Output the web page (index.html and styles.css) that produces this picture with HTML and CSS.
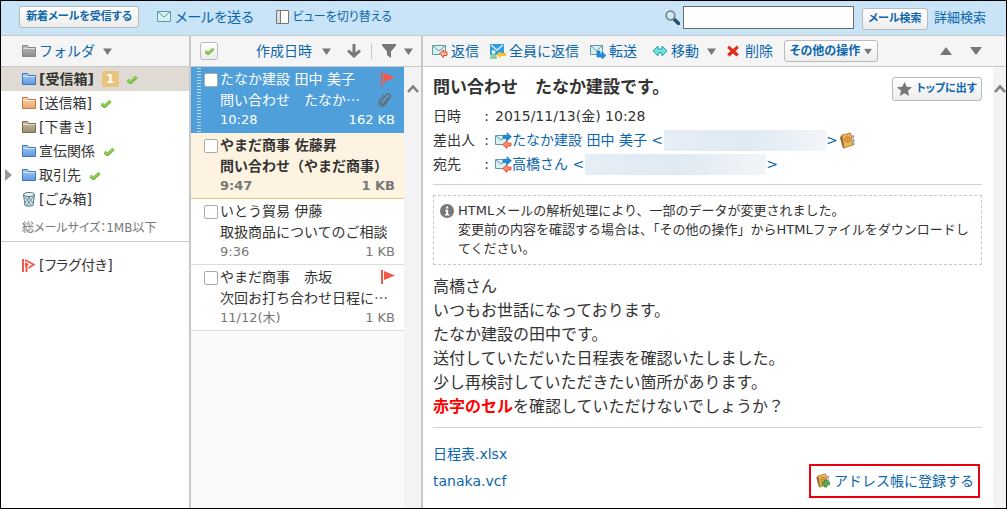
FILE: index.html
```html
<!DOCTYPE html>
<html lang="ja">
<head>
<meta charset="utf-8">
<title>メール</title>
<link rel="stylesheet" href="styles.css">
</head>
<body>
<svg class="defs" aria-hidden="true">
  <defs>
    <linearGradient id="gBlue" x1="0" y1="0" x2="0" y2="1"><stop offset="0" stop-color="#a9cdf5"/><stop offset="1" stop-color="#5b97e0"/></linearGradient>
    <linearGradient id="gOrange" x1="0" y1="0" x2="0" y2="1"><stop offset="0" stop-color="#fbd9b4"/><stop offset="1" stop-color="#eba36a"/></linearGradient>
    <linearGradient id="gBrown" x1="0" y1="0" x2="0" y2="1"><stop offset="0" stop-color="#c9bda5"/><stop offset="1" stop-color="#9c8c70"/></linearGradient>
    <linearGradient id="gGray" x1="0" y1="0" x2="0" y2="1"><stop offset="0" stop-color="#bdbdbd"/><stop offset="1" stop-color="#8c8c8c"/></linearGradient>
    <symbol id="folder" viewBox="0 0 14 12"><path d="M.5 11.500V.5h5l1 2h7v9z" stroke="currentColor"/><path d="M1 3.500h12" stroke="#fff" stroke-opacity=".6"/></symbol>
    <symbol id="check" viewBox="0 0 12 9"><path d="M1.500 5l3 2.500L10.500 2" fill="none" stroke="#6db33a" stroke-width="3.200"/><path d="M1.500 4.800l3 2L10.300 1.800" fill="none" stroke="#98d35a" stroke-width="1.600"/></symbol>
    <symbol id="down" viewBox="0 0 9 7"><path d="M0 .5h9L4.500 7z" fill="#777"/></symbol>
    <symbol id="flag" viewBox="0 0 15 14"><path d="M1 0h2v14H1zM4 1l11 4.500L4 10z" fill="#f4584a"/></symbol>
    <symbol id="chev" viewBox="0 0 12 9"><path d="M1 8l5-5.500L11 8" fill="none" stroke="#808080" stroke-width="2.600"/></symbol>
    <symbol id="mail" viewBox="0 0 14 11"><path d="M.5.5h13v10H.5z" fill="#d8f0f2" stroke="#5f9ba5"/><path d="M1 1l6 5 6-5" fill="none" stroke="#5f9ba5"/></symbol>
    <symbol id="exchange" viewBox="0 0 17 17"><path d="M.5 3.500h11v9H.5z" fill="#d8f0f2" stroke="#5f9ba5"/><path d="M1 4l5 4 5-4" fill="none" stroke="#5f9ba5"/><path d="M8 3.500h4V.8l4.500 4-4.500 4V6.500H8z" fill="#1e8fe0" stroke="#1670b8" stroke-width=".6"/><path d="M16 11v3h-4v2.500L7.500 12.500 12 8.800V11z" fill="#ff8a6c" stroke="#d8452c" stroke-width=".8"/></symbol>
    <symbol id="book" viewBox="0 0 17 17"><path d="M11 3l3 1 1 8-2 1z" fill="#e8eef0"/><path d="M13 3l2 .5v3l-1.500-.5z" fill="#d86fa5"/><path d="M14 7l1.500.5V10L14 9.500z" fill="#5a9be0"/><path d="M14 10.500l1.500.5v2.500L14 13z" fill="#6bbf59"/><path d="M1 5.500L3 3l2.500 12.500L4 16.500z" fill="#8d6028"/><path d="M3 3l8.500-2L14 13l-9 3z" fill="#eab45a" stroke="#a87328" stroke-width=".8"/><circle cx="8.500" cy="7.500" r="2.600" fill="none" stroke="#c07226"/><circle cx="8.500" cy="7.500" r=".9" fill="#c07226"/></symbol>
  </defs>
</svg>

<div class="app">
  <header class="topbar">
    <button class="btn receive">新着メールを受信する</button>
    <a class="toplink send" href="#"><svg width="14" height="11"><use href="#mail"/></svg>メールを送る</a>
    <a class="toplink view" href="#"><svg width="13" height="14" viewBox="0 0 13 14"><path d="M.5.5h12v13H.5z" fill="#fff" stroke="#777"/><path d="M1 1h3v12H1z" fill="#ddd"/><path d="M4.500 1v12" stroke="#777"/></svg>ビューを切り替える</a>
    <form class="search">
      <svg width="15" height="15" viewBox="0 0 15 15"><path d="M8.500 8.500l5 5" stroke="#24506e" stroke-width="3.400" stroke-linecap="round"/><circle cx="5.500" cy="5.500" r="4.300" fill="#cfe9f7" stroke="#7a8891" stroke-width="1.800"/><path d="M3.500 5a2 2 0 0 1 2-2" fill="none" stroke="#fff"/></svg>
      <input class="query" type="text" aria-label="メール検索">
      <button class="btn find" type="button">メール検索</button>
      <a class="advanced" href="#">詳細検索</a>
    </form>
  </header>

  <div class="columns">
    <nav class="side">
      <div class="bar folder-bar">
        <button class="plain"><svg class="gray" width="14" height="12" fill="url(#gGray)"><use href="#folder"/></svg>フォルダ<svg class="caret" width="9" height="7"><use href="#down"/></svg></button>
      </div>
      <ul class="folders">
        <li class="on"><svg class="blue" width="14" height="12" fill="url(#gBlue)"><use href="#folder"/></svg><a href="#">[受信箱]</a><span class="badge">1</span><svg width="12" height="9"><use href="#check"/></svg></li>
        <li><svg class="orange" width="14" height="12" fill="url(#gOrange)"><use href="#folder"/></svg><a href="#">[送信箱]</a><svg width="12" height="9"><use href="#check"/></svg></li>
        <li><svg class="brown" width="14" height="12" fill="url(#gBrown)"><use href="#folder"/></svg><a href="#">[下書き]</a></li>
        <li><svg class="blue" width="14" height="12" fill="url(#gBlue)"><use href="#folder"/></svg><a href="#">宣伝関係</a><svg width="12" height="9"><use href="#check"/></svg></li>
        <li class="parent"><svg width="7" height="12" viewBox="0 0 7 12"><path d="M0 0l7 6-7 6z" fill="#999"/></svg><svg class="blue" width="14" height="12" fill="url(#gBlue)"><use href="#folder"/></svg><a href="#">取引先</a><svg width="12" height="9"><use href="#check"/></svg></li>
        <li><svg width="14" height="15" viewBox="0 0 14 15"><path d="M1.500 2.500l1.500 11q4 1.500 8 0l1.500-11z" fill="#d5e4e9" stroke="#527684"/><path d="M3 5l6 8M6 5l5 6M11 5l-6 8M8 5l-5 6" stroke="#6d909d"/><ellipse cx="7" cy="2.500" rx="5.500" ry="2" fill="#eef6f8" stroke="#527684"/></svg><a href="#">[ごみ箱]</a></li>
      </ul>
      <p class="total">総メールサイズ：1MB以下</p>
      <p class="flagged"><svg width="15" height="15" viewBox="0 0 15 15"><path d="M1 1h2v13H1zM4.500 6h2v8h-2z" fill="#f4584a"/><path d="M4 1l10.500 5.500L7.500 11V9l3.500-2.500L4 3z" fill="#f4584a"/><path d="M4 4l4 2.500L4 9z" fill="#f4584a"/></svg><a href="#">[フラグ付き]</a></p>
    </nav>

    <section class="list">
      <div class="bar list-bar">
        <button class="checkall" aria-label="すべて選択"><svg width="11" height="8"><use href="#check"/></svg></button>
        <button class="plain sort">作成日時<svg class="caret" width="9" height="7"><use href="#down"/></svg></button>
        <button class="plain" aria-label="降順"><svg width="14" height="14" viewBox="0 0 14 14"><path d="M5.500 0h3v8.500L12 5.500l2 2L7 14 0 7.500l2-2 3.500 3z" fill="#777"/></svg></button>
        <i class="divider"></i>
        <button class="plain filter" aria-label="絞り込み"><svg width="14" height="14" viewBox="0 0 14 14"><path d="M0 0h14v1.500L9 7.500V14L5 11V7.500L0 1.500z" fill="#777"/></svg><svg class="caret" width="9" height="7"><use href="#down"/></svg></button>
      </div>
      <div class="scroller">
        <ul class="mails">
          <li class="selected">
            <input type="checkbox" aria-label="たなか建設 田中 美子">
            <div class="text">
              <div class="line"><span>たなか建設 田中 美子</span><svg width="15" height="14"><use href="#flag"/></svg></div>
              <div class="line subject"><span>問い合わせ　たなか…</span><svg class="clip" width="13" height="15" viewBox="0 0 13 15"><path d="M10.500 5L6 11.500q-1.500 1.500-2.500.5t0-2.500L8 3q1.500-2 3.300-.8T12 5.500L7 12.500q-2 2.500-4.500 1T1.500 9L6 2.500" fill="none" stroke="#6a6a6a" stroke-width="1.300"/></svg></div>
              <div class="line meta"><span>10:28</span><span>162 KB</span></div>
            </div>
          </li>
          <li class="unread">
            <input type="checkbox" aria-label="やまだ商事 佐藤昇">
            <div class="text">
              <div class="line"><span>やまだ商事 佐藤昇</span></div>
              <div class="line subject"><span>問い合わせ（やまだ商事）</span></div>
              <div class="line meta"><span>9:47</span><span>1 KB</span></div>
            </div>
          </li>
          <li>
            <input type="checkbox" aria-label="いとう貿易 伊藤">
            <div class="text">
              <div class="line"><span>いとう貿易 伊藤</span></div>
              <div class="line subject"><span>取扱商品についてのご相談</span></div>
              <div class="line meta"><span>9:36</span><span>1 KB</span></div>
            </div>
          </li>
          <li>
            <input type="checkbox" aria-label="やまだ商事 赤坂">
            <div class="text">
              <div class="line"><span>やまだ商事　赤坂</span><svg width="15" height="14"><use href="#flag"/></svg></div>
              <div class="line subject"><span>次回お打ち合わせ日程に…</span></div>
              <div class="line meta"><span>11/12(木)</span><span>1 KB</span></div>
            </div>
          </li>
        </ul>
        <div class="track"><svg width="12" height="9"><use href="#chev"/></svg></div>
      </div>
    </section>

    <main class="detail">
      <div class="bar detail-bar">
        <button class="plain"><svg width="16" height="14" viewBox="0 0 16 14"><path d="M.5 1.500h13v9H.5z" fill="#d8f0f2" stroke="#5f9ba5"/><path d="M1 2l6 5 6-5" fill="none" stroke="#5f9ba5"/><path d="M7.500 9.500L11.500 6v2H15v3.500h-3.500v2z" fill="#ffb49c" stroke="#e2502e"/></svg>返信</button>
        <button class="plain"><svg width="16" height="16" viewBox="0 0 16 16"><path d="M0 1h14v11H0z" fill="#2f9be0"/><path d="M1 2l6 5 6-5" fill="none" stroke="#d8f0ff" stroke-width="1.500"/><circle cx="3.500" cy="9" r="2" fill="#e8f5dd"/><path d="M0 16q0-5 3.500-5T7 16z" fill="#8fcba0"/><path d="M6.500 11.500L10.500 8v2H16v3h-5.500v2.500z" fill="#fbc02d"/></svg>全員に返信</button>
        <button class="plain"><svg width="16" height="15" viewBox="0 0 16 15"><path d="M.5 1.500h12v9H.5z" fill="#d8f0f2" stroke="#5f9ba5"/><path d="M1 2l5.500 5L12 2" fill="none" stroke="#5f9ba5"/><path d="M7 7h3v3h2V8l4 3.500-4 3.500v-2H7z" fill="#1e8fe0" stroke="#1670b8" stroke-width=".6"/></svg>転送</button>
        <button class="plain move"><svg width="16" height="12" viewBox="0 0 16 12"><path d="M1 6l5-5v3h4V1l5 5-5 5V8H6v3z" fill="#70e0e0" stroke="#2ba5a8"/></svg>移動<svg class="caret" width="9" height="7"><use href="#down"/></svg></button>
        <button class="plain del"><svg width="12" height="12" viewBox="0 0 12 12"><path d="M2 .5l4 3.500 4-3.500L11.800 3 8.500 6l3.300 3.500-2.300 2L6 8.500l-3.500 3L.2 9l3.300-3L.2 3z" fill="#e02b1d"/></svg>削除</button>
        <button class="btn other">その他の操作<svg width="8" height="7" viewBox="0 0 9 7"><use href="#down"/></svg></button>
        <span class="updown">
          <button class="plain" aria-label="前へ"><svg width="12" height="8" viewBox="0 0 12 8"><path d="M6 0l6 8H0z" fill="#777"/></svg></button>
          <button class="plain" aria-label="次へ"><svg width="12" height="8" viewBox="0 0 12 8"><path d="M0 0h12L6 8z" fill="#777"/></svg></button>
        </span>
      </div>
      <div class="scroller">
        <article class="mail">
          <div class="headline">
            <h1>問い合わせ　たなか建設です。</h1>
            <button class="btn totop"><svg width="15" height="14" viewBox="0 0 15 14"><path d="M7.500 0l2.200 4.800 5.300.5-4 3.500 1.200 5.200-4.700-2.700L2.800 14 4 8.800 0 5.300l5.300-.5z" fill="#777"/></svg>トップに出す</button>
          </div>
          <dl class="fields">
            <dt>日時<span>:</span></dt><dd>2015/11/13(金) 10:28</dd>
            <dt>差出人<span>:</span></dt><dd><a href="#"><svg width="17" height="17"><use href="#exchange"/></svg>たなか建設 田中 美子 &lt;<i class="masked from"></i>&gt;</a><svg class="addr" width="17" height="17"><use href="#book"/></svg></dd>
            <dt>宛先<span>:</span></dt><dd><a href="#"><svg width="17" height="17"><use href="#exchange"/></svg>高橋さん &lt;<i class="masked to"></i>&gt;</a></dd>
          </dl>
          <div class="notice">
            <svg width="14" height="14" viewBox="0 0 14 14"><circle cx="7" cy="7" r="7" fill="#777"/><path d="M6 2.500h2.200v2H6zM5 5.800h3.200v4.400H9.500v1.300H4.800v-1.300H6V7H5z" fill="#fff"/></svg>
            <p>HTMLメールの解析処理により、一部のデータが変更されました。<br>変更前の内容を確認する場合は、「その他の操作」からHTMLファイルをダウンロードしてください。</p>
          </div>
          <p class="body">高橋さん<br>いつもお世話になっております。<br>たなか建設の田中です。<br>送付していただいた日程表を確認いたしました。<br>少し再検討していただきたい箇所があります。<br><strong>赤字のセル</strong>を確認していただけないでしょうか？</p>
          <ul class="files">
            <li><a href="#">日程表.xlsx</a></li>
            <li><a href="#">tanaka.vcf</a><a class="register" href="#"><svg width="16" height="15" viewBox="0 0 17 17"><use href="#book" width="17" height="17"/><path d="M10 8h3v2.500h3v3h-3V16h-3v-2.500H7.500v-3H10z" fill="#55b04a" stroke="#2d7d2b" stroke-width=".7"/></svg>アドレス帳に登録する</a></li>
          </ul>
        </article>
        <div class="track"><svg width="12" height="9"><use href="#chev"/></svg></div>
      </div>
    </main>
  </div>
</div>
</body>
</html>
```
FILE: styles.css
```css
* { box-sizing: border-box; }
body, ul, p, h1, dl, dd { margin: 0; padding: 0; }
ul { list-style: none; }
body, button, input {
  font-family: "DejaVu Sans", "Noto Sans CJK JP", sans-serif;
  font-size: 14px;
  color: #333;
}
a { color: #0b66ad; text-decoration: none; }
svg { flex: none; display: block; }
.defs { position: absolute; width: 0; height: 0; }

.app {
  min-height: 100vh;
  display: flex;
  flex-direction: column;
  border: 1px solid #000;
  line-height: 20px;
  white-space: nowrap;
}

/* top bar */
.topbar {
  display: flex;
  align-items: center;
  height: 35px;
  padding: 0 20px 3px 18px;
  background: #c9e4f6;
  border-bottom: 1px solid #c8c8c8;
}
.btn {
  display: flex;
  align-items: center;
  justify-content: center;
  gap: 4px;
  height: 22px;
  padding: 0 5px;
  border: 1px solid #b4bcbc;
  border-radius: 3px;
  background: linear-gradient(#fff, #ececec);
  color: #0b66ad;
  font-size: 12px;
  font-weight: bold;
  line-height: 18px;
  font-feature-settings: "palt";
}
.receive { width: 120px; font-size: 11px; }
.toplink { display: flex; align-items: center; gap: 4px; font-feature-settings: "palt"; }
.send { margin-left: 18px; font-size: 14px; }
.view { margin-left: 22px; font-size: 12px; }
.search { display: flex; align-items: center; margin-left: auto; padding-top: 2px; }
.query { width: 171px; height: 23px; margin: 0 8px 0 3px; border: 1px solid #6d6d6d; background: #fff; }
.find { width: 66px; margin-top: 2px; font-size: 11px; }
.advanced { margin-left: 6px; font-size: 13px; }

/* columns */
.columns { flex: 1; display: flex; }
.bar {
  display: flex;
  align-items: center;
  height: 31px;
  background: #f5f5f5;
  border-bottom: 1px solid #c8c8c8;
}
.plain {
  display: flex;
  align-items: center;
  gap: 3px;
  padding: 0;
  border: 0;
  background: none;
  color: #0b66ad;
  line-height: 20px;
}
.caret { margin-left: 5px; }
.side { width: 190px; border-right: 2px solid #c8c8c8; background: #fff; }
.list { width: 232px; border-right: 2px solid #c8c8c8; display: flex; flex-direction: column; background: #fafafa; }
.detail { flex: 1; min-width: 0; display: flex; flex-direction: column; background: #fff; }
.scroller { flex: 1; display: flex; }
.track { display: flex; justify-content: center; padding-top: 17px; background: #f3f3f3; }
.list .track { width: 17px; }
.detail .track { width: 13px; }

/* folders */
.folder-bar { padding-left: 21px; }
.gray { color: #858585; }
.blue { color: #3f78c2; }
.orange { color: #c5793f; }
.brown { color: #7b6b4f; }
.folders li { display: flex; align-items: center; height: 24px; padding-left: 21px; }
.folders a { margin: 0 8px 0 3px; color: #333; }
.folders .on { background: #dfdbd4; }
.folders .on a { font-weight: bold; }
.folders .parent { padding-left: 4px; }
.parent .blue { margin-left: 10px; }
.badge {
  width: 17px;
  margin-right: 7px;
  border-radius: 2px;
  background: #eac47c;
  color: #fff;
  font-size: 12px;
  font-weight: bold;
  line-height: 16px;
  text-align: center;
}
.total {
  padding: 7px 0 3px 21px;
  border-bottom: 1px solid #c8c8c8;
  color: #777;
  font-size: 12px;
  font-feature-settings: "palt";
}
.flagged { display: flex; align-items: center; gap: 3px; padding: 13px 0 0 20px; }
.flagged a { color: #333; font-feature-settings: "palt"; }

/* message list */
.list-bar { padding-left: 9px; }
.checkall {
  display: flex;
  align-items: center;
  justify-content: center;
  width: 18px;
  height: 18px;
  padding: 0;
  border: 1px solid #b4bcbc;
  border-radius: 3px;
  background: linear-gradient(#fff, #ececec);
}
.sort { margin: 0 16px 0 38px; gap: 5px; }
.divider { width: 1px; height: 16px; margin: 0 10px; background: #c8c8c8; }
.mails { flex: 1; }
.mails li {
  display: flex;
  height: 66px;
  padding: 2px 9px 0 13px;
  border-bottom: 1px solid #dcdcdc;
  background: #fff;
}
.mails input {
  flex: none;
  appearance: none;
  width: 14px;
  height: 14px;
  margin: 4px 2px 0 0;
  border: 1px solid #aaa;
  border-radius: 2px;
  background: #fff;
}
.text { flex: 1; min-width: 0; }
.line { display: flex; align-items: center; justify-content: space-between; height: 20px; }
.subject { font-family: "Noto Sans CJK JP", sans-serif; }
.clip { margin-right: 4px; }
.line.meta { height: 22px; font-size: 13px; color: #777; }
.mails .selected { background: #4f9fdb; border-color: #4f9fdb; color: #fff; }
.mails .selected::before {
  content: "";
  flex: none;
  width: 4px;
  margin: -2px 3px 0 -7px;
  background: radial-gradient(circle, #bddcf2 1px, transparent 1px) 0 0 / 2px 3px;
}
.mails .selected .meta { color: #fff; }
.mails .unread { background: #fdf3e0; border-color: #eac47c; font-weight: bold; }

/* message */
.detail-bar { gap: 11px; padding: 0 24px 0 9px; }
.move { margin-left: 4px; }
.del { gap: 6px; }
.detail-bar .other { width: 94px; }
.updown { display: flex; gap: 18px; margin-left: auto; }
.mail { flex: 1; min-width: 0; padding: 6px 11px 0 10px; }
.headline { display: flex; align-items: center; justify-content: space-between; padding-bottom: 3px; }
.headline h1 { font-size: 17px; line-height: 24px; font-weight: bold; }
.totop { width: 90px; height: 24px; margin-top: 4px; font-size: 11px; }
.fields {
  display: grid;
  grid-template-columns: 56px 1fr;
  column-gap: 6px;
  padding-bottom: 8px;
  border-bottom: 1px solid #d2d2d2;
  line-height: 24px;
}
.fields dt { display: flex; justify-content: space-between; }
.fields dd, .fields a { display: flex; align-items: center; }
.masked { height: 21px; margin-left: 1px; background: linear-gradient(90deg, #e6eef6, #dfeaf3 50%, #f2f5f8); }
.from { width: 162px; }
.to { width: 181px; }
.addr { margin-left: 1px; }
.notice {
  display: flex;
  gap: 4px;
  margin-top: 10px;
  padding: 5px 4px 6px 6px;
  border: 1px dashed #c8c8c8;
  font-size: 13px;
  line-height: 19px;
}
.notice svg { margin-top: 3px; }
.notice p { flex: 1; white-space: normal; }
.body { padding: 10px 0 8px; border-bottom: 1px solid #d2d2d2; font-size: 16px; line-height: 24px; }
.body strong { color: #f00; }
.files { padding-top: 12px; }
.files li { display: flex; align-items: center; justify-content: space-between; height: 27px; }
.register {
  display: flex;
  align-items: center;
  gap: 3px;
  height: 34px;
  margin-right: 2px;
  padding: 0 4px;
  border: 2px solid #e60012;
}
```
